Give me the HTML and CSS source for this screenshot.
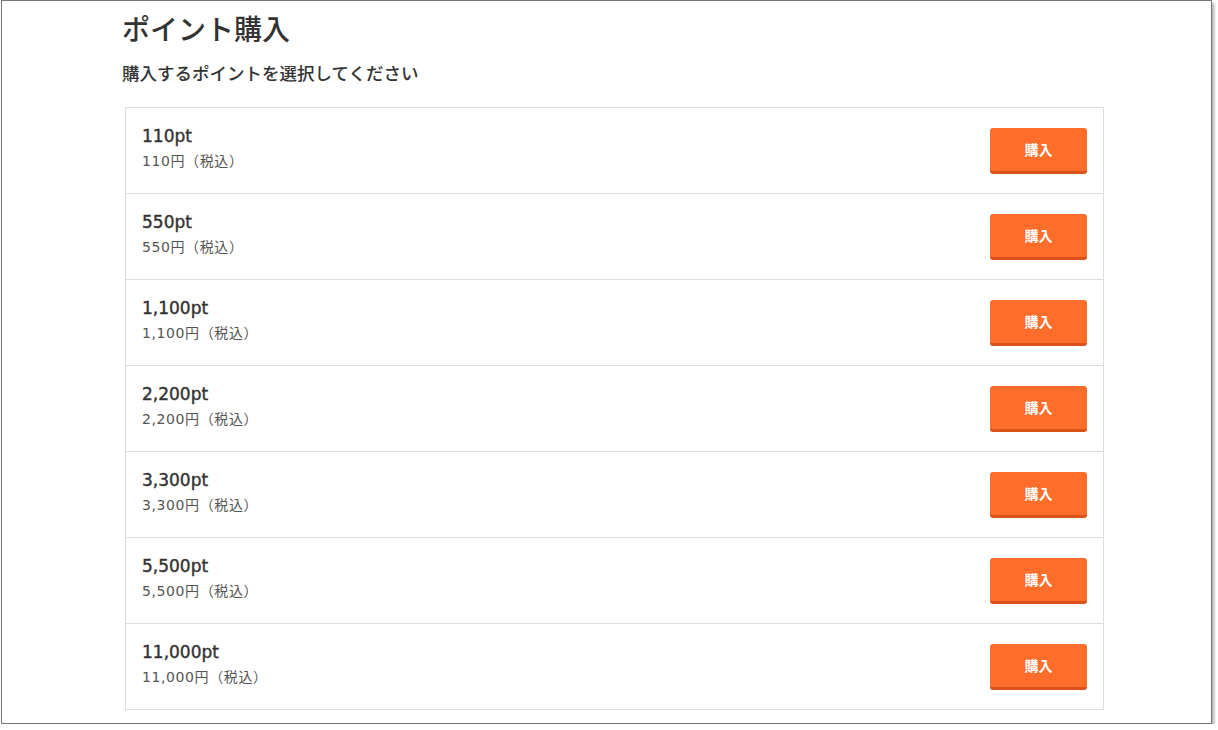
FILE: index.html
```html
<!DOCTYPE html>
<html lang="ja">
<head>
  <meta charset="UTF-8">
  <meta name="viewport" content="width=device-width, initial-scale=1.0">
  <title>ポイント購入</title>
  <link rel="stylesheet" href="styles.css">
</head>
<body>
  <div class="frame">
    <div class="container">
      <h1>ポイント購入</h1>
      <p class="lead">購入するポイントを選択してください</p>

      <ul class="point-list">
        <li class="point-item">
          <div class="point-info">
            <div class="point-amount">110pt</div>
            <div class="point-price">110円（税込）</div>
          </div>
          <button class="buy-btn">購入</button>
        </li>
        <li class="point-item">
          <div class="point-info">
            <div class="point-amount">550pt</div>
            <div class="point-price">550円（税込）</div>
          </div>
          <button class="buy-btn">購入</button>
        </li>
        <li class="point-item">
          <div class="point-info">
            <div class="point-amount">1,100pt</div>
            <div class="point-price">1,100円（税込）</div>
          </div>
          <button class="buy-btn">購入</button>
        </li>
        <li class="point-item">
          <div class="point-info">
            <div class="point-amount">2,200pt</div>
            <div class="point-price">2,200円（税込）</div>
          </div>
          <button class="buy-btn">購入</button>
        </li>
        <li class="point-item">
          <div class="point-info">
            <div class="point-amount">3,300pt</div>
            <div class="point-price">3,300円（税込）</div>
          </div>
          <button class="buy-btn">購入</button>
        </li>
        <li class="point-item">
          <div class="point-info">
            <div class="point-amount">5,500pt</div>
            <div class="point-price">5,500円（税込）</div>
          </div>
          <button class="buy-btn">購入</button>
        </li>
        <li class="point-item">
          <div class="point-info">
            <div class="point-amount">11,000pt</div>
            <div class="point-price">11,000円（税込）</div>
          </div>
          <button class="buy-btn">購入</button>
        </li>
      </ul>
    </div>
  </div>
</body>
</html>
```

FILE: styles.css
```css
body {
  font-family: "Noto Sans CJK JP", sans-serif;
  background-color: #fff;
  color: #333;
  margin: 0;
}
.frame {
  width: 1209px;
  height: 722px;
  margin: 0 0 0 1px;
  border: 1px solid #777;
  box-shadow: 2px 3px 3px rgba(0,0,0,0.35);
  background: white;
  overflow: hidden;
}
.container {
  width: 982px;
  margin-left: 120px;
  padding-top: 9px;
}
h1 {
  font-size: 28px;
  font-weight: 500;
  line-height: 36px;
  margin: 0 0 15px;
}
.lead {
  font-size: 17.5px;
  font-weight: 500;
  line-height: 24px;
  margin: 0 0 22px;
}
.point-list {
  list-style: none;
  width: 979px;
  box-sizing: border-box;
  margin: 0 0 0 3px;
  padding: 0;
  border: 1px solid #ddd;
}
.point-item {
  display: flex;
  align-items: center;
  justify-content: space-between;
  height: 85px;
  padding: 0 16px;
  border-top: 1px solid #ddd;
}
.point-item:first-child {
  border-top: none;
}
.point-info {
  font-family: "DejaVu Sans", "Noto Sans CJK JP", sans-serif;
  padding-bottom: 4px;
}
.point-amount {
  font-size: 17px;
  line-height: 22px;
  -webkit-text-stroke: 0.4px #333;
}
.point-price {
  font-size: 14px;
  line-height: 22px;
  color: #555;
  letter-spacing: 0.6px;
  margin-top: 3px;
}
.buy-btn {
  width: 97px;
  height: 46px;
  background-color: #ff6d2a;
  color: white;
  border: none;
  border-bottom: 3px solid #d9531b;
  border-radius: 3px;
  font-family: "Noto Sans CJK JP", sans-serif;
  font-size: 14px;
  font-weight: bold;
  cursor: pointer;
}
```
